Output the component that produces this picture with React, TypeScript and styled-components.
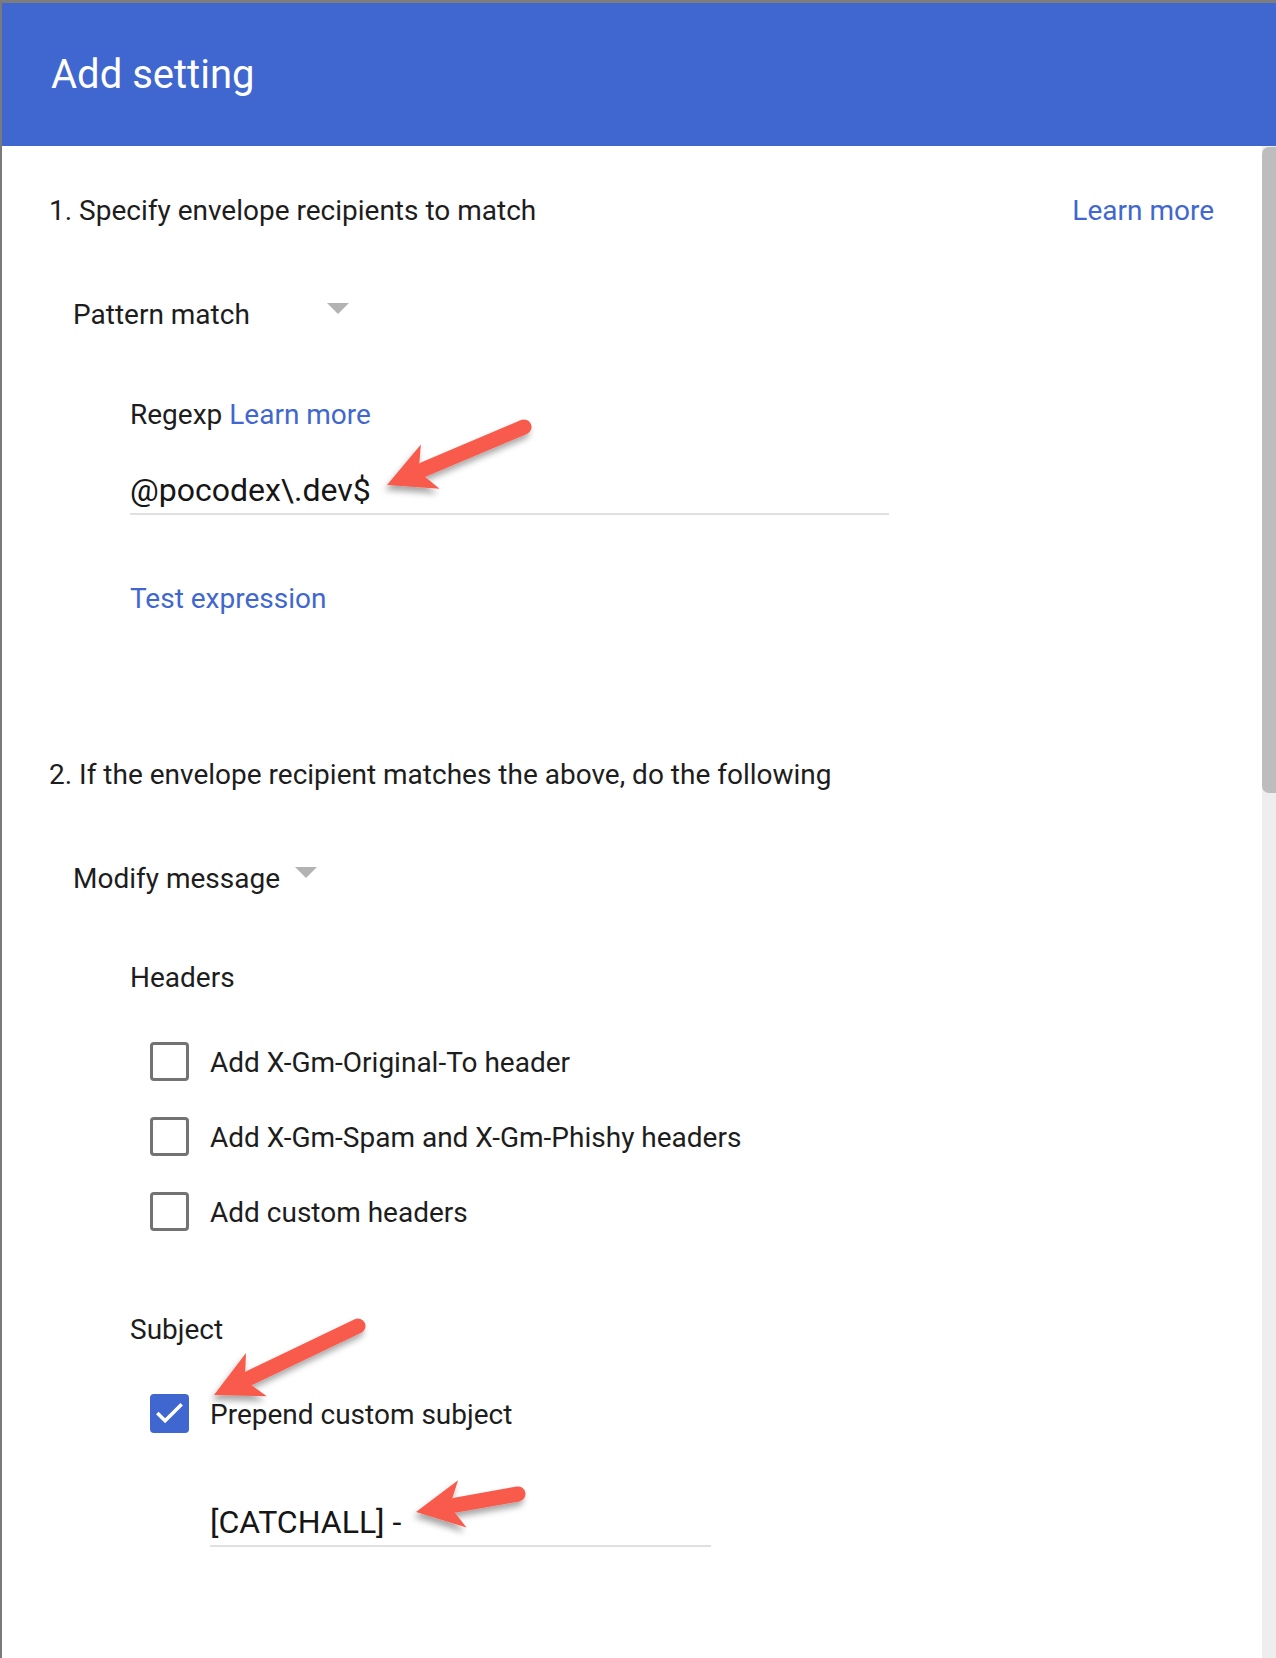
import React from "react";
import styled, { createGlobalStyle } from "styled-components";

const GlobalStyle = createGlobalStyle`
  html, body { margin: 0; padding: 0; background: #ffffff; }
  body {
    font-family: Roboto, "Liberation Sans", Arial, sans-serif;
    overflow: hidden;
  }
  * { box-sizing: border-box; }
`;

const BLUE = "#3f67cf";
const TEXT = "#1d1d1d";

const Frame = styled.div`
  position: relative;
  width: 1276px;
  height: 1658px;
  overflow: hidden;
  background: #ffffff;
`;

const Window = styled.div`
  display: flex;
  flex-direction: column;
  height: 100%;
  border-top: 3px solid #7d7d7d;
  border-left: 2px solid #7a7a7a;
`;

const Header = styled.header`
  flex: none;
  height: 143px;
  padding: 48px 49px 0;
  background: ${BLUE};
`;

const HeaderTitle = styled.h1`
  margin: 0;
  font-size: 40px;
  line-height: 48px;
  font-weight: 400;
  color: #ffffff;
`;

const Body = styled.div`
  flex: 1;
  display: flex;
  min-height: 0;
`;

const Content = styled.main`
  flex: 1;
  padding: 47px 48px 0 47px;
  color: ${TEXT};
`;

const Scrollbar = styled.div`
  flex: none;
  width: 14px;
  padding-top: 1px;
  background: #eeeeee;
`;

const Thumb = styled.div`
  height: 646px;
  background: #bdbdbd;
  border-radius: 7px 0 0 7px;
`;

const SectionHead = styled.div<{ $top?: number }>`
  display: flex;
  justify-content: space-between;
  align-items: baseline;
  margin-top: ${(p) => p.$top ?? 0}px;
`;

const SectionTitle = styled.h2`
  margin: 0;
  font-size: 28px;
  line-height: 36px;
  font-weight: 400;
  color: ${TEXT};
`;

const Link = styled.a`
  color: ${BLUE};
  text-decoration: none;
  font-size: 28px;
  line-height: 36px;
  cursor: pointer;
`;

const LinkBlock = styled(Link)<{ $top: number }>`
  display: block;
  width: max-content;
  margin-top: ${(p) => p.$top}px;
`;

const Dropdown = styled.div<{ $top: number }>`
  display: flex;
  align-items: flex-start;
  width: max-content;
  margin: ${(p) => p.$top}px 0 0 24px;
  cursor: pointer;
`;

const DropdownValue = styled.span<{ $minWidth?: number }>`
  font-size: 28px;
  line-height: 36px;
  min-width: ${(p) => p.$minWidth ?? 0}px;
  color: ${TEXT};
`;

const Caret = styled.span`
  width: 0;
  height: 0;
  margin: 6px 0 0 15px;
  border-left: 11px solid transparent;
  border-right: 11px solid transparent;
  border-top: 11px solid #b3b3b3;
`;

const Indented = styled.div`
  padding-left: 81px;
`;

const FieldLabel = styled.div<{ $top: number }>`
  margin-top: ${(p) => p.$top}px;
  font-size: 28px;
  line-height: 36px;
  color: ${TEXT};
`;

const TextField = styled.input<{ $top: number; $width: number; $indent?: number }>`
  display: block;
  box-sizing: content-box;
  width: ${(p) => p.$width}px;
  height: 40px;
  margin: ${(p) => p.$top}px 0 0 ${(p) => p.$indent ?? 0}px;
  padding: 0 0 3px;
  border: none;
  border-bottom: 2px solid #e0e0e0;
  background: transparent;
  outline: none;
  font-family: Roboto, "Liberation Sans", Arial, sans-serif;
  font-size: 32px;
  line-height: 40px;
  color: #161616;
`;

const CheckRow = styled.label<{ $top: number }>`
  display: flex;
  align-items: center;
  gap: 21px;
  width: max-content;
  margin: ${(p) => p.$top}px 0 0 20px;
  cursor: pointer;
`;

const Box = styled.span<{ $checked?: boolean }>`
  flex: none;
  display: flex;
  align-items: center;
  justify-content: center;
  width: 39px;
  height: 39px;
  border-radius: 4px;
  border: ${(p) => (p.$checked ? "none" : "3px solid #737373")};
  background: ${(p) => (p.$checked ? BLUE : "transparent")};
`;

const CheckText = styled.span`
  padding-top: 2px;
  font-size: 28px;
  line-height: 32px;
  color: ${TEXT};
`;

const Overlay = styled.svg`
  position: absolute;
  top: 0;
  left: 0;
  pointer-events: none;
`;

type Pt = [number, number];

function Arrow({ tail, tip }: { tail: Pt; tip: Pt }) {
  const dx = tail[0] - tip[0];
  const dy = tail[1] - tip[1];
  const len = Math.hypot(dx, dy);
  const ux = dx / len;
  const uy = dy / len;
  const nx = -uy;
  const ny = ux;
  const at = (a: number, p: number): Pt => [tip[0] + a * ux + p * nx, tip[1] + a * uy + p * ny];
  const fmt = (q: Pt) => `${q[0].toFixed(1)},${q[1].toFixed(1)}`;
  const head = [at(0, 0), at(47, -24), at(38, -7), at(40, 0), at(38, 7), at(47, 24)].map(fmt).join(" ");
  const start = at(40, 0);
  return (
    <g filter="url(#arrowShadow)">
      <line
        x1={start[0]}
        y1={start[1]}
        x2={tail[0]}
        y2={tail[1]}
        stroke="#f85a4b"
        strokeWidth={15}
        strokeLinecap="round"
      />
      <polygon points={head} fill="#f85a4b" />
    </g>
  );
}

function CheckMark() {
  return (
    <svg width="39" height="39" viewBox="0 0 40 40" aria-hidden="true">
      <path d="M7.5 19.5 L15.5 27.5 L32.5 10.5" fill="none" stroke="#ffffff" strokeWidth="3.6" />
    </svg>
  );
}

function Checkbox({ label, checked, top }: { label: string; checked?: boolean; top: number }) {
  return (
    <CheckRow $top={top}>
      <Box $checked={checked}>{checked && <CheckMark />}</Box>
      <CheckText>{label}</CheckText>
    </CheckRow>
  );
}

export default function App() {
  return (
    <>
      <GlobalStyle />
      <Frame>
        <Window>
          <Header>
            <HeaderTitle>Add setting</HeaderTitle>
          </Header>
          <Body>
            <Content>
              <SectionHead>
                <SectionTitle>1. Specify envelope recipients to match</SectionTitle>
                <Link>Learn more</Link>
              </SectionHead>

              <Dropdown $top={68}>
                <DropdownValue $minWidth={239}>Pattern match</DropdownValue>
                <Caret />
              </Dropdown>

              <Indented>
                <FieldLabel $top={64}>
                  Regexp <Link>Learn more</Link>
                </FieldLabel>
                <TextField $top={37} $width={759} defaultValue="@pocodex\.dev$" readOnly />
                <LinkBlock $top={66}>Test expression</LinkBlock>
              </Indented>

              <SectionHead $top={140}>
                <SectionTitle>2. If the envelope recipient matches the above, do the following</SectionTitle>
              </SectionHead>

              <Dropdown $top={68}>
                <DropdownValue>Modify message</DropdownValue>
                <Caret />
              </Dropdown>

              <Indented>
                <FieldLabel $top={63}>Headers</FieldLabel>
                <Checkbox top={46} label="Add X-Gm-Original-To header" />
                <Checkbox top={36} label="Add X-Gm-Spam and X-Gm-Phishy headers" />
                <Checkbox top={36} label="Add custom headers" />

                <FieldLabel $top={81}>Subject</FieldLabel>
                <Checkbox top={46} checked label="Prepend custom subject" />
                <TextField $top={69} $width={501} $indent={80} defaultValue="[CATCHALL] -" readOnly />
              </Indented>
            </Content>
            <Scrollbar>
              <Thumb />
            </Scrollbar>
          </Body>
        </Window>

        <Overlay width="1276" height="1658" viewBox="0 0 1276 1658">
          <defs>
            <filter id="arrowShadow" x="-30%" y="-30%" width="160%" height="180%">
              <feDropShadow dx="-2" dy="5" stdDeviation="3" floodColor="#000000" floodOpacity="0.35" />
            </filter>
          </defs>
          <Arrow tail={[524, 427]} tip={[387, 485]} />
          <Arrow tail={[358, 1326]} tip={[214, 1395]} />
          <Arrow tail={[518, 1494]} tip={[416, 1512]} />
        </Overlay>
      </Frame>
    </>
  );
}
